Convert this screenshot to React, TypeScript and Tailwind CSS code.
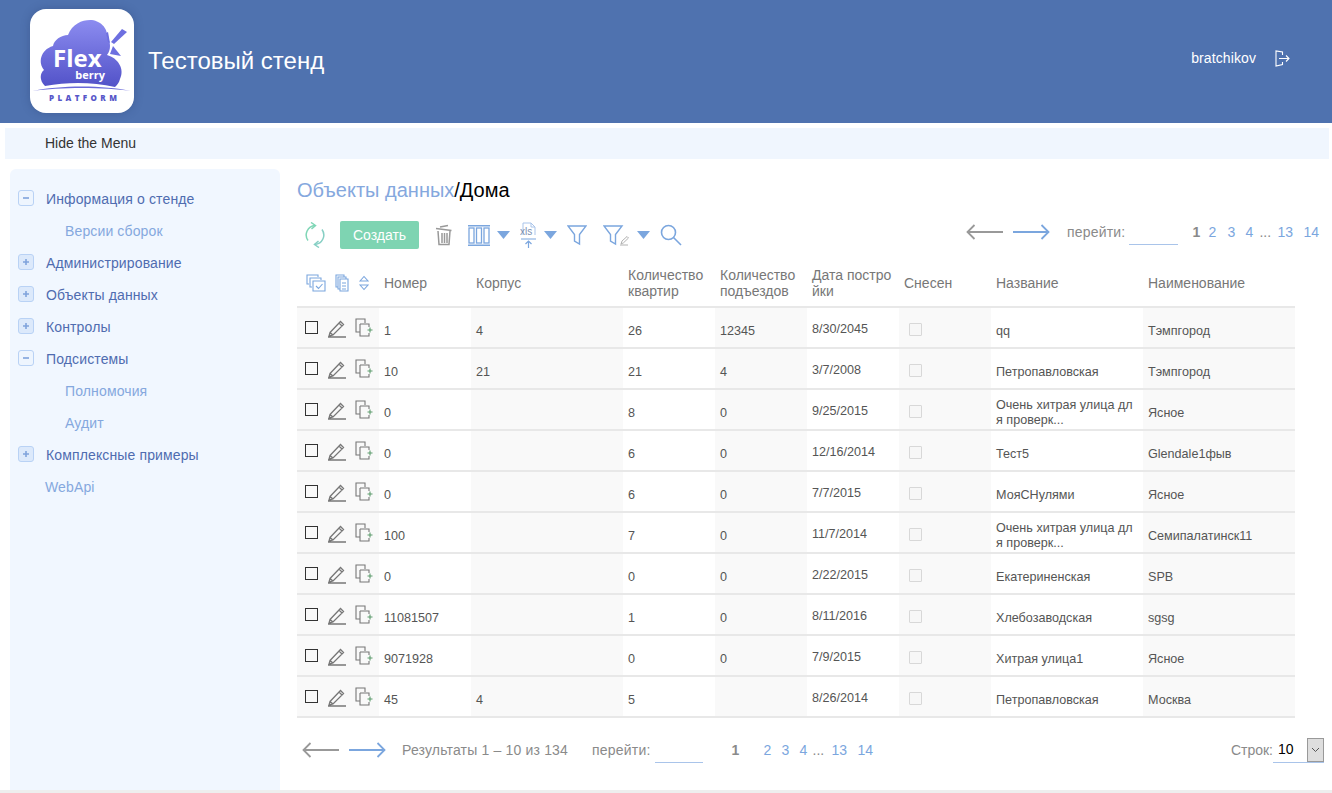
const menu = [
  { label: "Информация о стенде", mark: "minus" },
  { label: "Версии сборок", sub: true },
  { label: "Администрирование", mark: "plus" },
  { label: "Объекты данных", mark: "plus" },
  { label: "Контролы", mark: "plus" },
  { label: "Подсистемы", mark: "minus" },
  { label: "Полномочия", sub: true },
  { label: "Аудит", sub: true },
  { label: "Комплексные примеры", mark: "plus" },
  { label: "WebApi", link: true },
];

const rows = [
  ["1", "4", "26", "12345", "8/30/2045", "qq", "Тэмпгород"],
  ["10", "21", "21", "4", "3/7/2008", "Петропавловская", "Тэмпгород"],
  ["0", "", "8", "0", "9/25/2015", "Очень хитрая улица для проверк...", "Ясное"],
  ["0", "", "6", "0", "12/16/2014", "Тест5", "Glendale1фыв"],
  ["0", "", "6", "0", "7/7/2015", "МояСНулями", "Ясное"],
  ["100", "", "7", "0", "11/7/2014", "Очень хитрая улица для проверк...", "Семипалатинск11"],
  ["0", "", "0", "0", "2/22/2015", "Екатериненская", "SPB"],
  ["11081507", "", "1", "0", "8/11/2016", "Хлебозаводская", "sgsg"],
  ["9071928", "", "0", "0", "7/9/2015", "Хитрая улица1", "Ясное"],
  ["45", "4", "5", "", "8/26/2014", "Петропавловская", "Москва"],
];

function Logo() {
  return (
    <div className="h-[104px] w-[104px] shrink-0 rounded-[16px] bg-white shadow-[0_0_8px_rgba(40,60,110,0.35)]">
      <svg viewBox="0 0 104 104" className="h-[104px] w-[104px]">
        <defs>
          <linearGradient id="cloud" x1="0" y1="0" x2="0" y2="1">
            <stop offset="0" stopColor="#8c8cf0" />
            <stop offset="1" stopColor="#5252c8" />
          </linearGradient>
        </defs>
        <path
          d="M15 77C9 71 10 64 14 61C8 54 10 41 23 37C24 31 31 26 38 26C42 15 52 11 60 11C70 11 78 19 77 28C81 33 81 41 77 46C88 49 95 60 90 70C89 74 87 76 85 78C62 73 38 73 15 77Z"
          fill="url(#cloud)"
        />
        <path d="M2 82C30 76 74 76 101 82C74 78 30 78 2 82Z" fill="#6a6ad8" />
        <path d="M92 20L97 23L84 35L81 33Z" fill="#6d6fe0" />
        <path d="M76 24L78 23L80 34L78 33Z" fill="#6d6fe0" />
        <path d="M83 37L91 47L80 45Z" fill="#6d6fe0" />
        <text x="23" y="58" fontFamily="Open Sans, sans-serif" fontWeight="700" fontSize="24" fill="#fff">Flex</text>
        <text x="75" y="70" textAnchor="end" fontFamily="Open Sans, sans-serif" fontWeight="700" fontSize="11" fill="#fff">berry</text>
        <text x="19" y="92" fontFamily="Open Sans, sans-serif" fontWeight="800" fontSize="8" letterSpacing="3.4" fill="#5757c9">PLATFORM</text>
      </svg>
    </div>
  );
}

function TreeMark({ kind }: { kind: string }) {
  return (
    <span className={`flex h-[16px] w-[16px] items-center justify-center rounded-[3px] border border-[#b9d2f5] text-[#7fa3dc] ${kind === "plus" ? "bg-[#dce9fb]" : "bg-[#eef5fe]"}`}>
      <svg width="8" height="8" viewBox="0 0 8 8">
        <path d={kind === "plus" ? "M1 4H7M4 1V7" : "M1 4H7"} stroke="currentColor" strokeWidth="1.6" />
      </svg>
    </span>
  );
}

function Arrow({ dir, color }: { dir: "left" | "right"; color: string }) {
  return (
    <svg width="38" height="16" viewBox="0 0 38 16" fill="none" stroke={color} strokeWidth="1.8">
      {dir === "left" ? <path d="M37 8H1.5M8.5 1L1.5 8L8.5 15" /> : <path d="M1 8H36.5M29.5 1L36.5 8L29.5 15" />}
    </svg>
  );
}

function Caret() {
  return (
    <svg width="13" height="8" viewBox="0 0 13 8">
      <path d="M0 0H13L6.5 8Z" fill="#7ba6de" />
    </svg>
  );
}

function FilterIcon({ pen }: { pen?: boolean }) {
  return (
    <svg width={pen ? 26 : 20} height="22" viewBox={pen ? "0 0 26 22" : "0 0 20 22"} fill="none">
      <path d="M1 2H19L12.5 10.5V20L7.5 17V10.5Z" stroke="#7ba6de" strokeWidth="1.4" />
      {pen && <path d="M18 20L19 17L24 12.5L25.5 14L20.5 18.8ZM17 21H25" stroke="#a9a9a9" strokeWidth="0.9" />}
    </svg>
  );
}

function Pager() {
  return (
    <span className="flex items-center text-[14px] text-[#7ba6de]">
      <span className="w-[16px] font-bold text-[#8a8a8a]">1</span>
      <span className="w-[19px]">2</span>
      <span className="w-[18px]">3</span>
      <span className="w-[14px]">4</span>
      <span className="w-[18px] text-[#8a8a8a]">...</span>
      <span className="w-[26px]">13</span>
      <span>14</span>
    </span>
  );
}

function Toolbar() {
  return (
    <div className="flex h-[28px] items-center">
      <svg width="22" height="26" viewBox="0 0 22 26" fill="none" strokeWidth="1.5" className="ml-[7px]">
        <g stroke="#7fd6b6">
          <path d="M4 18.500A9.500 9.500 0 0 1 11 3.500" />
          <path d="M7 .5L11.500 3.500L7.500 7" />
        </g>
        <g stroke="#86cfc4">
          <path d="M18 7.500A9.500 9.500 0 0 1 11 22.500" />
          <path d="M15 25.500L10.500 22.500L14.500 19" />
        </g>
      </svg>
      <button className="ml-[14px] h-[28px] w-[79px] rounded-[2px] bg-[#7ed4b2] text-[14px] text-white">Создать</button>
      <svg width="18" height="22" viewBox="0 0 18 22" fill="none" stroke="#999" strokeWidth="1.5" className="ml-[16px]">
        <path d="M1 4.500L16.500 6.500M5 3L13 1.500M3 7L4 20.500H14L15 7M7 9V19M9.500 9V19M12 9V19" />
      </svg>
      <svg width="22" height="21" viewBox="0 0 22 21" fill="none" stroke="#7ba6de" strokeWidth="1.3" className="ml-[15px]">
        <path d="M0 .7H22M0 20.300H22" strokeWidth="1.4" />
        <rect x="1" y="3" width="5" height="15" />
        <rect x="8.500" y="3" width="5" height="15" />
        <rect x="16" y="3" width="5" height="15" />
      </svg>
      <span className="ml-[7px]"><Caret /></span>
      <svg width="17" height="26" viewBox="0 0 17 26" fill="none" className="ml-[10px]">
        <path d="M3 13V1H11L15 5V13M11 1V5H15" stroke="#a9c4ea" strokeWidth="1" />
        <text x="0" y="13" fontFamily="Liberation Sans, sans-serif" fontSize="10" fill="#7b8fb0">xls</text>
        <path d="M1 17H16M8.500 26V19M5.500 22L8.500 19L11.500 22" stroke="#7ba6de" strokeWidth="1.2" />
      </svg>
      <span className="ml-[7px]"><Caret /></span>
      <span className="ml-[10px] flex"><FilterIcon /></span>
      <span className="ml-[16px] flex"><FilterIcon pen /></span>
      <span className="ml-[8px]"><Caret /></span>
      <svg width="22" height="22" viewBox="0 0 22 22" fill="none" stroke="#7ba6de" strokeWidth="1.6" className="ml-[10px]">
        <circle cx="8.500" cy="8.500" r="7" />
        <path d="M13.500 13.500L21 21" />
      </svg>
      <div className="mb-[6px] ml-auto flex items-center pr-[5px]">
        <Arrow dir="left" color="#999999" />
        <span className="ml-[8px]"><Arrow dir="right" color="#7ba6de" /></span>
        <span className="ml-[17px] text-[14px] tracking-[0.2px] text-[#8a8a8a]">перейти:</span>
        <span className="ml-[4px] mt-[2px] h-[24px] w-[49px] border-b border-[#a9c4ea]" />
        <span className="ml-[14px]"><Pager /></span>
      </div>
    </div>
  );
}

function RowIcons() {
  return (
    <div className="flex items-center pl-[8px]">
      <span className="mb-[1px] h-[13px] w-[13px] border-[1.5px] border-[#333]" />
      <svg width="20" height="20" viewBox="0 0 20 20" fill="none" stroke="#777" strokeWidth="1.3" className="ml-[9px]">
        <path d="M3 14.500L13.500 3.500L16.500 6.500L6 17L2 18ZM12 5L15 8M3 14.500L6 17M1 19H19" />
      </svg>
      <svg width="18" height="20" viewBox="0 0 18 20" fill="none" stroke="#777" strokeWidth="1.1" className="ml-[8px]">
        <path d="M5 14H1V1H10V5M5 6H14V9M14 15V18H5V6" />
        <path d="M12.500 12H17.500M15 9.500V14.500" stroke="#5a9a6a" />
      </svg>
    </div>
  );
}

function DataTable() {
  const shaded = "bg-[#f9f9f9]";
  const cell = "border-b-2 border-[#e8e8e8] px-[5px] align-middle text-[12.6px] leading-[15px] text-[#555]";
  return (
    <table className="mt-[15px] w-[998px] table-fixed border-collapse">
      <colgroup>
        <col className="w-[82px]" />
        <col className="w-[92px]" />
        <col className="w-[152px]" />
        <col className="w-[92px]" />
        <col className="w-[92px]" />
        <col className="w-[92px]" />
        <col className="w-[92px]" />
        <col className="w-[152px]" />
        <col className="w-[152px]" />
      </colgroup>
      <thead>
        <tr className="h-[43px] text-left text-[14px] leading-[16px] text-[#777]">
          <th className="border-b-2 border-[#e8e8e8] p-0 pb-[4px] font-normal">
            <div className="flex items-center pl-[9px]">
              <svg width="20" height="18" viewBox="0 0 20 18" fill="none" stroke="#7ba6de" strokeWidth="1.1">
                <path d="M12 3V1H1V10H3M15 6V4H4V13H6M7 7H19V17H7ZM10 12L12.500 14.500L16.500 10" />
              </svg>
              <svg width="14" height="18" viewBox="0 0 14 18" fill="none" stroke="#7ba6de" strokeWidth="1.1" className="ml-[9px]">
                <path d="M9 3V1H1V13H3M11 5V3H3V15H5M5 5H13V17H5ZM7 9H11M7 12H11M7 15H11" />
              </svg>
              <svg width="10" height="16" viewBox="0 0 10 16" fill="none" stroke="#7ba6de" strokeWidth="1.1" className="ml-[10px]">
                <path d="M1 6L5 1.500L9 6ZM1 10L5 14.500L9 10Z" />
              </svg>
            </div>
          </th>
          {["Номер", "Корпус", "Количество квартир", "Количество подъездов", "Дата постройки", "Снесен", "Название", "Наименование"].map((h) => (
            <th key={h} className={`border-b-2 border-[#e8e8e8] px-[5px] pb-[4px] font-normal ${h === "Дата постройки" ? "break-all" : ""}`}>{h}</th>
          ))}
        </tr>
      </thead>
      <tbody>
        {rows.map((r, i) => (
          <tr key={i} className="h-[41px]">
            <td className={`border-b-2 border-[#e8e8e8] p-0 align-middle ${shaded}`}><RowIcons /></td>
            <td className={cell}><div className="pt-[7px]">{r[0]}</div></td>
            <td className={`${cell} ${shaded}`}><div className="pt-[7px]">{r[1]}</div></td>
            <td className={cell}><div className="pt-[7px]">{r[2]}</div></td>
            <td className={`${cell} ${shaded}`}><div className="pt-[7px]">{r[3]}</div></td>
            <td className={cell}><div className="pt-[3px]">{r[4]}</div></td>
            <td className={`${cell} ${shaded}`}>
              <div className="ml-[5px] mt-[4px] h-[13px] w-[13px] rounded-[1px] border border-[#d8d8d8] bg-[#f7f7f7]" />
            </td>
            <td className={cell}><div className="break-all pt-[7px]">{r[5]}</div></td>
            <td className={`${cell} ${shaded}`}><div className="pt-[7px]">{r[6]}</div></td>
          </tr>
        ))}
      </tbody>
    </table>
  );
}

function Footer() {
  return (
    <div className="mt-[19px] flex h-[26px] items-center pl-[5px] text-[14px] text-[#8a8a8a]">
      <Arrow dir="left" color="#999999" />
      <span className="ml-[8px]"><Arrow dir="right" color="#7ba6de" /></span>
      <span className="ml-[16px] tracking-[0.17px]">Результаты 1 – 10 из 134</span>
      <span className="ml-[24px] tracking-[0.2px]">перейти:</span>
      <span className="ml-[4px] mt-[2px] h-[24px] w-[48px] border-b border-[#a9c4ea]" />
      <span className="ml-[29px] w-[32px] font-bold">1</span>
      <span className="flex items-center text-[#7ba6de]">
        <span className="w-[18px]">2</span>
        <span className="w-[18px]">3</span>
        <span className="w-[13px]">4</span>
        <span className="w-[19px] text-[#8a8a8a]">...</span>
        <span className="w-[26px]">13</span>
        <span>14</span>
      </span>
      <div className="ml-auto flex items-center">
        <span>Строк:</span>
        <div className="flex h-[25px] w-[51px] items-center justify-between border-b border-[#a9c4ea] pl-[5px] text-black">
          <span>10</span>
          <span className="flex h-[24px] w-[17px] items-center justify-center border border-[#999] bg-[#dedede]">
            <svg width="9" height="6" viewBox="0 0 9 6" fill="none" stroke="#555" strokeWidth="1">
              <path d="M1 1L4.500 4.500L8 1" />
            </svg>
          </span>
        </div>
      </div>
    </div>
  );
}

export default function App() {
  return (
    <div className="flex h-[793px] flex-col overflow-hidden bg-white font-['Liberation_Sans',sans-serif]">
      <header className="flex h-[123px] shrink-0 items-center bg-[#4f72af] pb-[2px] pl-[30px] pr-[42px]">
        <Logo />
        <h1 className="ml-[14px] text-[24px] font-normal text-white">Тестовый стенд</h1>
        <span className="mb-[4px] ml-auto text-[14px] tracking-[0.1px] text-white">bratchikov</span>
        <svg width="15" height="17" viewBox="0 0 15 17" fill="none" stroke="#fff" strokeWidth="1.1" className="mb-[4px] ml-[19px]">
          <path d="M7.500 5V2L1 1V16L7.500 14.500V12M4 8.500H14M11 5.500L14 8.500L11 11.500" />
        </svg>
      </header>
      <div className="ml-[5px] mr-[3px] mt-[5px] flex h-[31px] shrink-0 items-center bg-[#f0f6fe] pl-[40px] text-[14px] text-[#333]">Hide the Menu</div>
      <div className="flex min-h-0 flex-1 pt-[10px]">
        <aside className="ml-[10px] w-[270px] shrink-0 rounded-t-[6px] bg-[#f1f7ff] pt-[14px]">
          {menu.map((m) => (
            <div key={m.label} className="flex h-[32px] items-center text-[14px] tracking-[0.13px]">
              {m.mark ? (
                <>
                  <span className="mb-[3px] ml-[8px]"><TreeMark kind={m.mark} /></span>
                  <span className="ml-[12px] text-[#4f6cb0]">{m.label}</span>
                </>
              ) : (
                <span className={`${m.sub ? "ml-[55px]" : "ml-[35px]"} text-[#85a8de]`}>{m.label}</span>
              )}
            </div>
          ))}
        </aside>
        <main className="ml-[17px] min-w-0 flex-1 pr-[8px]">
          <h2 className="mt-[10px] text-[20px] leading-[23px] font-normal text-black">
            <span className="text-[#85a8de]">Объекты данных</span>/Дома
          </h2>
          <div className="mt-[19px]"><Toolbar /></div>
          <DataTable />
          <Footer />
        </main>
      </div>
      <div className="h-[3px] shrink-0 bg-[#eeeeee]" />
    </div>
  );
}
